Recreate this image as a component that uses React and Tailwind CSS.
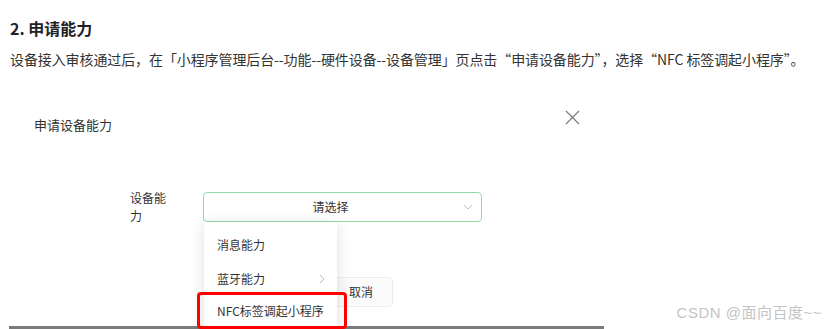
import React from "react";

export default function App() {
  const font = { fontFamily: '"Noto Sans CJK SC", "Noto Sans", sans-serif' };
  return (
    <div className="w-[832px] h-[329px] bg-white relative overflow-hidden" style={font}>
      <h3 className="pl-[10px] pt-[19px] text-[16px] leading-[18px] font-bold text-[#222226]">2. 申请能力</h3>
      <p className="pl-[10px] mt-[11px] text-[14px] leading-[22px] text-[#333] whitespace-nowrap tracking-[-0.1px]">
        设备接入审核通过后，在「小程序管理后台--功能--硬件设备--设备管理」页点击“申请设备能力”，选择“NFC 标签调起小程序”。
      </p>
      <div className="ml-[9px] mt-[30px] w-[595px] h-[229px] relative border-b-[3px] border-[#7a7a7a] bg-white">
        <div className="flex justify-between items-start pr-[24px]">
          <div className="pl-[25px] pt-[16px] text-[13px] leading-[18px] text-[#333]">申请设备能力</div>
          <div className="pt-[10px]">
            <svg width="15" height="15" viewBox="0 0 15 15" fill="none" stroke="#7a7a7a" strokeWidth="1.2">
              <path d="M1 1L14 14M14 1L1 14" />
            </svg>
          </div>
        </div>
        <div className="flex items-start mt-[58px]">
          <div className="ml-[121px] w-[40px] -mt-[3px] text-[12px] leading-[18px] text-[#333] break-all">设备能力</div>
          <div className="ml-[33px] w-[279px] h-[30px] rounded-[4px] border-[1.5px] border-[#94dba5] flex items-center justify-center relative">
            <span className="text-[12px] text-[#333] ml-[-24px]">请选择</span>
            <svg className="absolute right-[8px] top-[11px]" width="10" height="6" viewBox="0 0 10 6" fill="none" stroke="#bdbdbd" strokeWidth="1">
              <path d="M1 1L5 5L9 1" />
            </svg>
          </div>
        </div>
        <div className="mt-[52px] pl-[308px]">
          <div className="w-[76px] h-[30px] rounded-[4px] border border-[#ececec] bg-[#fbfbfb] flex items-center justify-center text-[12px] text-[#333]">
            <span className="ml-[12px]">取消</span>
          </div>
        </div>
        <div className="absolute left-[195px] top-[122px] w-[133px] h-[120px] bg-white shadow-[0_2px_14px_rgba(0,0,0,0.13)] text-[12px] text-[#333]">
          <div className="h-[11px]" />
          <div className="pl-[13px] h-[24px] leading-[24px]">消息能力</div>
          <div className="h-[10px]" />
          <div className="pl-[13px] pr-[12px] h-[24px] leading-[24px] flex justify-between items-center">
            <span>蓝牙能力</span>
            <svg width="6" height="10" viewBox="0 0 6 10" fill="none" stroke="#bdbdbd" strokeWidth="1">
              <path d="M1 1L5 5L1 9" />
            </svg>
          </div>
          <div className="h-[8px]" />
          <div className="pl-[13px] h-[24px] leading-[24px]">NFC标签调起小程序</div>
        </div>
        <div className="absolute left-[188px] top-[192px] w-[150px] h-[37px] border-[3px] border-[#f00] rounded-[4px]" />
      </div>
      <div className="absolute right-[10px] top-[303px] text-[15px] leading-[20px] text-[#c4c4c4] tracking-[0.5px]" style={{ fontFamily: '"Liberation Sans", "Noto Sans CJK SC", sans-serif' }}>CSDN @面向百度~~</div>
    </div>
  );
}
